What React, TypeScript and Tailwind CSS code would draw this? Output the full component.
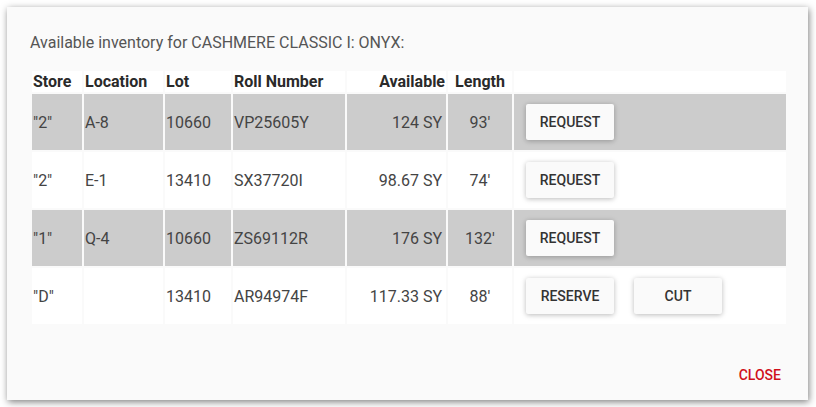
import React from "react";

type Row = {
  store: string;
  location: string;
  lot: string;
  roll: string;
  available: string;
  length: string;
  actions: string[];
  gray: boolean;
};

const rows: Row[] = [
  { store: '"2"', location: "A-8", lot: "10660", roll: "VP25605Y", available: "124 SY", length: "93'", actions: ["REQUEST"], gray: true },
  { store: '"2"', location: "E-1", lot: "13410", roll: "SX37720I", available: "98.67 SY", length: "74'", actions: ["REQUEST"], gray: false },
  { store: '"1"', location: "Q-4", lot: "10660", roll: "ZS69112R", available: "176 SY", length: "132'", actions: ["REQUEST"], gray: true },
  { store: '"D"', location: "", lot: "13410", roll: "AR94974F", available: "117.33 SY", length: "88'", actions: ["RESERVE", "CUT"], gray: false },
];

function RaisedButton({ label }: { label: string }) {
  return (
    <button
      type="button"
      className="h-[36px] w-[88px] rounded-[2px] bg-[#fafafa] text-[14px] leading-[36px] font-medium uppercase text-[#333] shadow-[0_1px_6px_rgba(0,0,0,0.14),0_1px_4px_rgba(0,0,0,0.14)]"
    >
      {label}
    </button>
  );
}

export default function App() {
  return (
    <div className="w-[816px] h-[407px] bg-white pt-[7px] pl-[7px]" style={{ fontFamily: "Roboto, 'Liberation Sans', sans-serif" }}>
      <div className="flex h-[393px] w-[801px] flex-col bg-[#fafafa] shadow-[1px_2px_7px_rgba(0,0,0,0.5)]">
        <div className="px-[23px] pt-[24px]">
          <div className="text-[16px] leading-[24px] text-[#555]">
            Available inventory for CASHMERE CLASSIC I: ONYX:
          </div>
          <table className="mt-[14px] w-[758px] table-fixed border-separate border-spacing-[2px] text-[16px] leading-[19px]">
            <thead>
              <tr className="bg-white text-[#2a2a2a]">
                <th className="w-[50px] bg-white p-px text-left font-bold">Store</th>
                <th className="w-[79px] bg-white p-px text-left font-bold">Location</th>
                <th className="w-[66px] bg-white p-px text-left font-bold">Lot</th>
                <th className="w-[112px] bg-white p-px text-left font-bold">Roll Number</th>
                <th className="w-[99px] bg-white p-px text-right font-bold">Available</th>
                <th className="w-[64px] bg-white p-px text-center font-bold">Length</th>
                <th className="w-[272px] bg-white p-px"></th>
              </tr>
            </thead>
            <tbody>
              {rows.map((r, i) => {
                const bg = r.gray ? "bg-[#cccccc]" : "bg-white";
                return (
                  <tr key={i} className="h-[56px] text-[#444]">
                    <td className={`${bg} p-px`}>{r.store}</td>
                    <td className={`${bg} p-px`}>{r.location}</td>
                    <td className={`${bg} p-px`}>{r.lot}</td>
                    <td className={`${bg} p-px`}>{r.roll}</td>
                    <td className={`${bg} py-px pl-px pr-[4px] text-right`}>{r.available}</td>
                    <td className={`${bg} p-px text-center`}>{r.length}</td>
                    <td className={`${bg} py-px pl-[12px]`}>
                      <div className="flex gap-[20px]">
                        {r.actions.map((a) => (
                          <RaisedButton key={a} label={a} />
                        ))}
                      </div>
                    </td>
                  </tr>
                );
              })}
            </tbody>
          </table>
        </div>
        <div className="flex-1" />
        <div className="flex justify-end pb-[7px] pr-[11px]">
          <button type="button" className="h-[36px] px-[16px] text-[14px] font-medium uppercase text-[#d0101b]">
            Close
          </button>
        </div>
      </div>
    </div>
  );
}
